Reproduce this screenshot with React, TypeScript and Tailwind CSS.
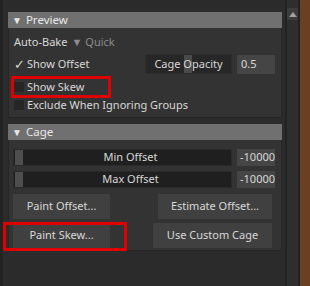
import React from "react";

const font = { fontFamily: '"Noto Sans", "Liberation Sans", sans-serif' };

function Header({ title }: { title: string }) {
  return (
    <div className="flex h-[16px] items-center bg-[#707070] pl-[4px] text-[11.5px] text-[#e8e8e8]">
      <span className="mr-[4px] text-[10px]">▼</span>
      {title}
    </div>
  );
}

function Check({ checked, label }: { checked?: boolean; label: string }) {
  return (
    <div className="flex h-[18px] items-center">
      <span className="mr-[3px] flex h-[10px] w-[10px] items-center justify-center bg-[#262626] text-[11px] leading-none text-[#d8d8d8]">
        {checked ? "✓" : ""}
      </span>
      <span>{label}</span>
    </div>
  );
}

function SliderRow({ label, value }: { label: string; value: string }) {
  return (
    <div className="flex h-[17px] items-stretch gap-[5px]">
      <div className="relative flex w-[219px] items-center justify-center border border-[#2a2a2a] bg-[#1f1f1f]">
        <div className="absolute left-[1px] top-0 h-full w-[8px] bg-[#4e4e4e]" />
        <span className="pl-[16px]">{label}</span>
      </div>
      <div className="flex w-[38px] items-center bg-[#454545] pl-[3px]">{value}</div>
    </div>
  );
}

function Btn({ label, w }: { label: string; w: string }) {
  return (
    <div className={`flex h-[25px] ${w} items-center justify-center bg-[#404040]`}>{label}</div>
  );
}

export default function App() {
  return (
    <div className="flex h-[286px] w-[310px] bg-[#2b2b2b] text-[11px] text-[#d8d8d8]" style={font}>
      <div className="relative w-[285px] border-l-[3px] border-[#232323] pl-[5px] pt-[12px]">
        <div className="w-[274px]">
          <Header title="Preview" />
          <div className="h-[90px] border-x border-b border-[#262626] bg-[#333333] px-[5px] pt-[5px]">
            <div className="flex h-[18px] items-center">
              <span>Auto-Bake</span>
              <span className="ml-[4px] flex items-center text-[#8c8c8c]">
                <span className="mr-[3px] text-[11px]">▼</span>Quick
              </span>
            </div>
            <div className="mt-[3px] flex h-[20px] items-center">
              <div className="flex w-[131px] items-center">
                <span className="mr-[2px] w-[11px] text-[13px] leading-none text-[#d8d8d8]">✓</span>
                <span>Show Offset</span>
              </div>
              <div className="relative flex h-[20px] w-[87px] items-center justify-center border border-[#2c2c2c] bg-[#272727]">
                <div className="absolute left-[38px] top-0 h-full w-[8px] bg-[#4a4a4a]" />
                <span className="relative">Cage Opacity</span>
              </div>
              <div className="ml-[5px] flex h-[19px] w-[38px] items-center bg-[#454545] pl-[4px]">0.5</div>
            </div>
            <div className="mt-[4px]">
              <Check label="Show Skew" />
            </div>
            <Check label="Exclude When Ignoring Groups" />
          </div>
          <div className="mt-[6px]">
            <Header title="Cage" />
          </div>
          <div className="flex h-[111px] flex-col border-x border-b border-[#262626] bg-[#333333] px-[4px] pt-[9px]">
            <SliderRow label="Min Offset" value="-10000" />
            <div className="mt-[5px]">
              <SliderRow label="Max Offset" value="-10000" />
            </div>
            <div className="mt-[6px] flex justify-between pr-[5px]">
              <Btn label="Paint Offset..." w="w-[97px]" />
              <Btn label="Estimate Offset..." w="w-[114px]" />
            </div>
            <div className="mt-[4px] flex justify-between pr-[5px]">
              <Btn label="Paint Skew..." w="w-[97px]" />
              <Btn label="Use Custom Cage" w="w-[119px]" />
            </div>
          </div>
        </div>
        <div className="absolute left-[8px] top-[76px] h-[22px] w-[100px] border-[3px] border-[#e00000]" />
        <div className="absolute left-[0px] top-[222px] h-[29px] w-[124px] border-[3px] border-[#e00000]" />
      </div>
      <div className="flex w-[15px] border-l-2 border-[#222222]">
        <div className="flex w-[11px] flex-col bg-[#2e2e2e]">
          <div className="mt-[8px] flex h-[12px] items-center justify-center bg-[#3c3c3c]">
            <div className="h-0 w-0 border-x-[4px] border-b-[5px] border-x-transparent border-b-[#a0a0a0]" />
          </div>
        </div>
        <div className="w-[2px] bg-[#222222]" />
      </div>
      <div className="flex-1 bg-[#6b3f22]" />
    </div>
  );
}
